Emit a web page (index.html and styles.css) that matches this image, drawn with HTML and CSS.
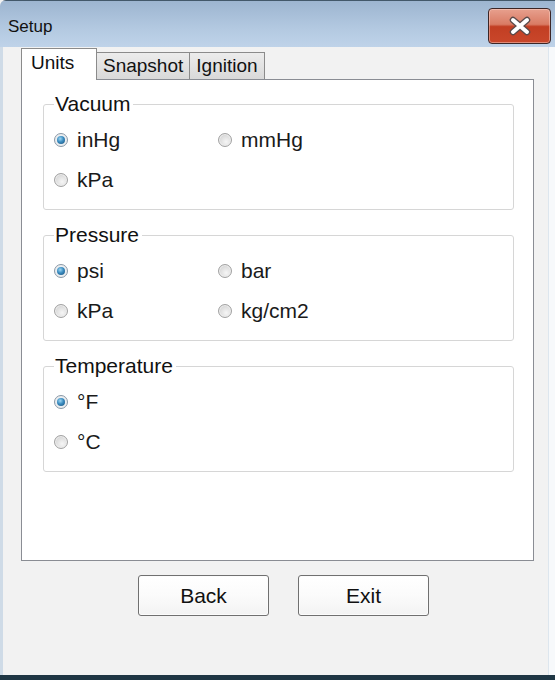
FILE: index.html
```html
<!DOCTYPE html>
<html>
<head>
<meta charset="utf-8">
<title>Setup</title>
<link rel="stylesheet" href="styles.css">
</head>
<body>
<div class="window">
  <div class="titlebar">
    <span class="title">Setup</span>
    <button class="close" aria-label="Close">
      <svg width="26" height="20" viewBox="0 0 26 20">
        <path d="M6 4 L20 16 M20 4 L6 16" stroke="#5a4a4a" stroke-width="6.5" stroke-linecap="round"/>
        <path d="M6 4 L20 16 M20 4 L6 16" stroke="#ffffff" stroke-width="4" stroke-linecap="round"/>
      </svg>
    </button>
  </div>
  <div class="client">
    <div class="tabs">
      <div class="tab active">Units</div>
      <div class="tab">Snapshot</div>
      <div class="tab">Ignition</div>
    </div>
    <div class="panel">
      <fieldset class="group">
        <legend>Vacuum</legend>
        <div class="options">
          <label class="opt"><span class="radio checked"></span>inHg</label>
          <label class="opt"><span class="radio"></span>mmHg</label>
          <label class="opt"><span class="radio"></span>kPa</label>
        </div>
      </fieldset>
      <fieldset class="group">
        <legend>Pressure</legend>
        <div class="options">
          <label class="opt"><span class="radio checked"></span>psi</label>
          <label class="opt"><span class="radio"></span>bar</label>
          <label class="opt"><span class="radio"></span>kPa</label>
          <label class="opt"><span class="radio"></span>kg/cm2</label>
        </div>
      </fieldset>
      <fieldset class="group">
        <legend>Temperature</legend>
        <div class="options">
          <label class="opt"><span class="radio checked"></span>°F</label>
          <label class="opt full"><span class="radio"></span>°C</label>
        </div>
      </fieldset>
    </div>
    <div class="buttons">
      <button class="btn">Back</button>
      <button class="btn">Exit</button>
    </div>
  </div>
</div>
</body>
</html>
```
FILE: styles.css
```css
* { box-sizing: border-box; }
html, body {
  margin: 0;
  padding: 0;
  width: 555px;
  height: 680px;
  overflow: hidden;
  background: #f2f2f2;
  font-family: "Liberation Sans", Arial, sans-serif;
  color: #111;
}
.window {
  width: 555px;
  height: 680px;
  display: flex;
  flex-direction: column;
  border-bottom: 5px solid #1f3644;
  border-top-left-radius: 6px;
  overflow: hidden;
  background: #f2f2f2;
}
.titlebar {
  height: 47px;
  flex: none;
  display: flex;
  justify-content: space-between;
  align-items: flex-start;
  padding: 7px 4px 0 8px;
  background: linear-gradient(#9db5d0, #b3c9e1 60%, #bfd3e9);
  border-top: 1px solid #43586a;
}
.title {
  font-size: 17px;
  line-height: 36px;
  padding-top: 1px;
  color: #111;
}
.close {
  width: 63px;
  height: 36px;
  border: 1px solid #3c2626;
  border-radius: 4px;
  background: linear-gradient(#e7a08e, #d97b64 45%, #c23e23 52%, #c9472b);
  display: flex;
  align-items: center;
  justify-content: center;
  padding: 0;
  box-shadow: inset 0 0 0 1px rgba(255, 220, 210, 0.45);
}
.client {
  flex: 1;
  display: flex;
  flex-direction: column;
  box-shadow: inset 3px 0 0 #cfdbe7, inset 1px 0 0 #8e9cab, inset -6px 0 0 #f7f9fb, inset -7px 0 0 #dde6ee;
}
.tabs {
  display: flex;
  align-items: flex-end;
  height: 32px;
  margin-left: 21px;
}
.tab {
  height: 27px;
  border: 1px solid #8b8b8b;
  border-bottom: none;
  margin-left: -1px;
  background: linear-gradient(#ececec, #d9d9d9);
  font-size: 19px;
  line-height: 26px;
  padding: 0 6px;
  color: #111;
}
.tab.active {
  height: 32px;
  width: 76px;
  margin-left: 0;
  margin-bottom: -1px;
  background: #ffffff;
  padding: 0 0 0 9px;
  line-height: 28px;
  position: relative;
  z-index: 1;
}
.panel {
  margin-left: 21px;
  width: 513px;
  height: 482px;
  border: 1px solid #8a8d94;
  background: #ffffff;
  padding: 12px 19px 0 21px;
}
.group {
  margin: 0 0 13px 0;
  padding: 4px 0 9px 10px;
  border: 1px solid #d6d6d6;
  border-radius: 3px;
  min-width: 0;
}
.group legend {
  font-size: 21px;
  line-height: 24px;
  padding: 0 3px 0 1px;
  color: #111;
}
.options {
  display: grid;
  grid-template-columns: 164px 1fr;
  grid-auto-rows: 40px;
}
.opt {
  display: flex;
  align-items: center;
  font-size: 21px;
  color: #1a1a1a;
}
.opt.full { grid-column: 1; }
.radio {
  width: 14px;
  height: 14px;
  border-radius: 50%;
  border: 1px solid #a2a2a2;
  background: radial-gradient(circle at 60% 65%, #f6f6f6 0, #dedede 55%, #c4c4c4 100%);
  margin-right: 9px;
  flex: none;
  display: flex;
  align-items: center;
  justify-content: center;
  box-shadow: inset 0 0 0 1px #eeeeee;
}
.radio.checked {
  border-color: #8a98a6;
  background: #e8eef3;
}
.radio.checked::after {
  content: "";
  width: 8px;
  height: 8px;
  border-radius: 50%;
  background: radial-gradient(circle at 40% 35%, #9fd6f2 0, #3a8cc0 45%, #1b4f78 100%);
}
.buttons {
  display: flex;
  gap: 29px;
  margin: 14px 0 0 138px;
}
.btn {
  width: 131px;
  height: 41px;
  border: 1px solid #707070;
  border-radius: 3px;
  background: linear-gradient(#ffffff, #fbfbfb 50%, #f3f3f3);
  font-family: "Liberation Sans", Arial, sans-serif;
  font-size: 21px;
  color: #111;
  padding: 0;
  box-shadow: inset 0 0 0 1px #fcfcfc;
}
```
